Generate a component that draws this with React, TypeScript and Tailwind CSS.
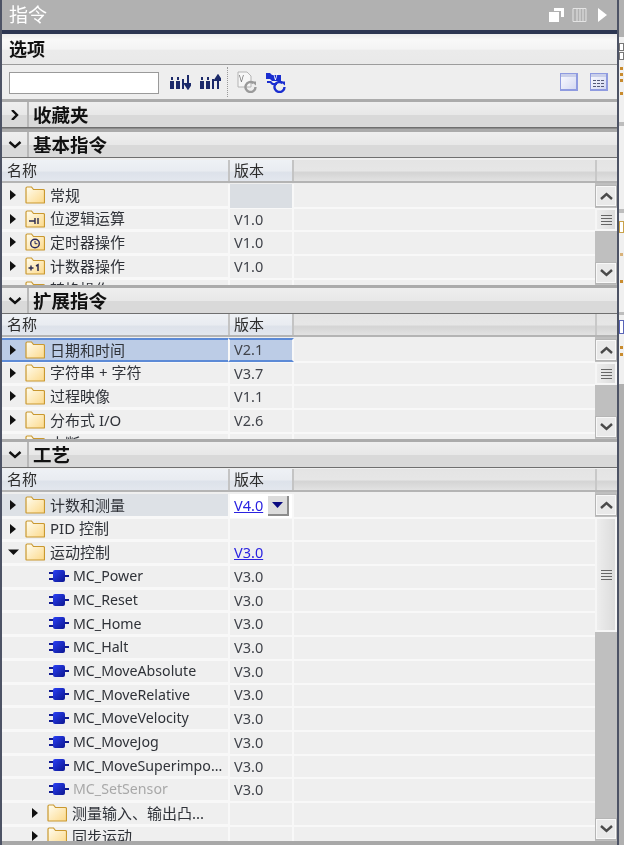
import type { ReactNode } from "react";

type Row = {
  name: string;
  version?: string;
  icon?: "folder" | "logic" | "timer" | "counter" | "block";
  depth?: number;
  arrow?: "right" | "down" | "none";
  link?: boolean;
  selected?: boolean;
  hover?: boolean;
  dim?: boolean;
  blank?: boolean;
};

const basicRows: Row[] = [
  { name: "常规", blank: true },
  { name: "位逻辑运算", version: "V1.0", icon: "logic" },
  { name: "定时器操作", version: "V1.0", icon: "timer" },
  { name: "计数器操作", version: "V1.0", icon: "counter" },
  { name: "转换操作" },
];

const extendedRows: Row[] = [
  { name: "日期和时间", version: "V2.1", selected: true },
  { name: "字符串 + 字符", version: "V3.7" },
  { name: "过程映像", version: "V1.1" },
  { name: "分布式 I/O", version: "V2.6" },
  { name: "中断" },
];

const blocks = [
  "MC_Power",
  "MC_Reset",
  "MC_Home",
  "MC_Halt",
  "MC_MoveAbsolute",
  "MC_MoveRelative",
  "MC_MoveVelocity",
  "MC_MoveJog",
  "MC_MoveSuperimpo...",
];

const techRows: Row[] = [
  { name: "计数和测量", hover: true },
  { name: "PID 控制" },
  { name: "运动控制", version: "V3.0", link: true, arrow: "down" },
  ...blocks.map((name): Row => ({ name, version: "V3.0", icon: "block", arrow: "none", depth: 1 })),
  { name: "MC_SetSensor", version: "V3.0", icon: "block", arrow: "none", depth: 1, dim: true },
  { name: "测量输入、输出凸...", depth: 1 },
  { name: "同步运动", depth: 1 },
];

const Folder = ({ children }: { children?: ReactNode }) => (
  <svg width="20" height="18" viewBox="0 0 20 18" className="shrink-0">
    <defs>
      <linearGradient id="folderFill" x1="0" y1="0" x2="1" y2="1">
        <stop offset="0" stopColor="#fffdf0" />
        <stop offset="1" stopColor="#fcd98a" />
      </linearGradient>
    </defs>
    <path
      d="M1 16.5V2.2C1 1.5 1.5 1 2.2 1h4.3l2 2.5h9.8c.7 0 1.2.5 1.2 1.2v11.8c0 .3-.2.5-.5.5H1.5c-.3 0-.5-.2-.5-.5z"
      fill="url(#folderFill)"
      stroke="#c9982f"
      strokeWidth="1.2"
    />
    {children}
  </svg>
);

const RowIcon = ({ icon }: { icon?: Row["icon"] }) => {
  if (icon === "block") {
    return (
      <svg width="20" height="14" viewBox="0 0 20 14" className="shrink-0">
        <defs>
          <linearGradient id="blockFill" x1="0" y1="0" x2="1" y2="1">
            <stop offset="0" stopColor="#2a40f5" />
            <stop offset="1" stopColor="#0c1690" />
          </linearGradient>
        </defs>
        <path d="M0 4h5M0 10h5M15 7h5" stroke="#101a90" strokeWidth="2" />
        <rect x="4" y="1" width="12" height="12" rx="2" fill="url(#blockFill)" />
      </svg>
    );
  }
  if (icon === "logic") {
    return (
      <Folder>
        <path d="M4 11h6M10 8v6M13 8v6" stroke="#2a2a50" strokeWidth="1.4" fill="none" />
      </Folder>
    );
  }
  if (icon === "timer") {
    return (
      <Folder>
        <circle cx="10" cy="10.5" r="4.3" fill="none" stroke="#2a2a60" strokeWidth="1.4" />
        <path d="M10 8v2.7h2.4" stroke="#2a2a60" strokeWidth="1" fill="none" />
      </Folder>
    );
  }
  if (icon === "counter") {
    return (
      <Folder>
        <path d="M3.5 11h5M6 8.5v5" stroke="#2a2a50" strokeWidth="1.4" />
        <path d="M11 9l2-1.2V14" stroke="#2a2a50" strokeWidth="1.5" fill="none" />
      </Folder>
    );
  }
  return <Folder />;
};

const Expander = ({ arrow = "right" }: { arrow?: Row["arrow"] }) => {
  if (arrow === "none") return <span className="w-[12px] shrink-0" />;
  return (
    <svg width="12" height="12" viewBox="0 0 12 12" className="shrink-0">
      {arrow === "right" ? <path d="M2 1l6 5-6 5z" fill="#111" /> : <path d="M0 3.5h11l-5.5 5.5z" fill="#111" />}
    </svg>
  );
};

const ScrollButton = ({ up }: { up?: boolean }) => (
  <div className="h-[22px] shrink-0 flex items-center justify-center bg-[#e9e9e9] border-2 border-[#f8f8f8] outline outline-[#b5b5b5] -outline-offset-1">
    <svg width="13" height="8" viewBox="0 0 13 8">
      <path d={up ? "M1 7l5.5-5L12 7" : "M1 1l5.5 5L12 1"} fill="none" stroke="#4a4a4a" strokeWidth="2.4" />
    </svg>
  </div>
);

const Scrollbar = ({ thumb }: { thumb: number }) => (
  <div className="w-[22px] shrink-0 h-full flex flex-col bg-[#bfbfbf] pt-[2px] pb-[1px]">
    <ScrollButton up />
    <div
      className="mt-[1px] shrink-0 flex items-center justify-center border-2 border-[#f6f6f6] bg-[linear-gradient(90deg,#ededed,#dcdcdc)]"
      style={{ height: thumb }}
    >
      <div className="w-[11px] flex flex-col gap-[2px]">
        <div className="h-px bg-[#666]" />
        <div className="h-px bg-[#666]" />
        <div className="h-px bg-[#666]" />
        <div className="h-px bg-[#666]" />
      </div>
    </div>
    <div className="flex-1" />
    <ScrollButton />
  </div>
);

const TableRow = ({ row }: { row: Row }) => {
  const depth = row.depth ?? 0;
  const isBlock = row.icon === "block";
  const band = row.selected
    ? "bg-[#bccce6] border-y-2 border-y-[#5c8ad6]"
    : "border-b-2 border-b-[#f8f8f8]";
  return (
    <div className="h-[23.7px] shrink-0 flex items-center border-b-2 border-b-[#f8f8f8]">
      <div className={`w-[226px] h-[23.7px] shrink-0 flex items-center ${band} ${row.hover ? "bg-[#dde1e6]" : ""}`}>
        <div className="flex items-center" style={{ paddingLeft: isBlock ? 22 : 6 + depth * 22 }}>
          <Expander arrow={row.arrow} />
          <span className={isBlock ? "ml-[13px]" : "ml-[5px]"}>
            <RowIcon icon={row.icon} />
          </span>
          <span
            className={`whitespace-nowrap ${isBlock ? "ml-[4px] text-[14.2px]" : "ml-[5px] text-[15px]"} ${row.dim ? "text-[#a8a8a8]" : "text-[#2f3238]"}`}
          >
            {row.name}
          </span>
        </div>
      </div>
      <div
        className={`w-[66px] h-[23.7px] shrink-0 flex items-center border-x-2 border-x-[#f8f8f8] ${row.selected ? band : ""} ${row.selected ? "border-x-[#bccce6]" : ""} ${row.blank ? "bg-[#dadee3]" : ""}`}
      >
        {row.hover ? (
          <div className="h-full w-full flex items-center bg-white pl-[4px]">
            <span className="text-[#2a22e0] underline">V4.0</span>
            <div className="ml-[5px] w-[21px] h-[20px] flex items-center justify-center bg-[#dcdcdc] border-r-2 border-b-2 border-[#8c8c8c]">
              <svg width="11" height="6" viewBox="0 0 11 6">
                <path d="M0 0h11L5.5 6z" fill="#0a0a80" />
              </svg>
            </div>
          </div>
        ) : (
          <span className={`pl-[4px] ${row.link ? "text-[#2a22e0] underline" : "text-[#40434a]"}`}>
            {row.version}
          </span>
        )}
      </div>
    </div>
  );
};

const TableHead = ({ gap }: { gap: number }) => (
  <div
    className="h-[23px] shrink-0 flex text-[15px] text-[#2c2c2c] bg-[linear-gradient(#e4e4e4_0%,#e6e6e6_50%,#d4d4d4_60%,#e2e2e2_100%)] border-b-2 border-b-[#b4b4b4]"
    style={{ marginTop: gap }}
  >
    <div className="w-[226px] pl-[5px] flex items-center bg-[linear-gradient(#eef1f5_0%,#e9ecf1_50%,#dde2ea_60%,#e3e7ee_100%)]">
      名称
    </div>
    <div className="w-[66px] pl-[4px] flex items-center border-x-2 border-x-[#c4c4c4] bg-[linear-gradient(#eef1f5_0%,#e9ecf1_50%,#dde2ea_60%,#e3e7ee_100%)]">
      版本
    </div>
    <div className="flex-1" />
    <div className="w-[22px] border-l-2 border-l-[#c8c8c8]" />
  </div>
);

const Table = ({
  rows,
  height,
  thumb,
  gap,
  top,
}: {
  rows: Row[];
  height: number;
  thumb: number;
  gap: number;
  top: number;
}) => (
  <div className="flex flex-col shrink-0">
    <TableHead gap={gap} />
    <div className="flex overflow-hidden" style={{ height }}>
      <div className="flex-1 flex flex-col overflow-hidden" style={{ paddingTop: top }}>
        {rows.map((row) => (
          <TableRow key={row.name} row={row} />
        ))}
      </div>
      <Scrollbar thumb={thumb} />
    </div>
  </div>
);

const Section = ({ title, open = true }: { title: string; open?: boolean }) => (
  <div className="h-[29px] shrink-0 flex items-stretch border-t-[3px] border-t-[#ababab] border-b border-b-[#6f6f6f] bg-[linear-gradient(#eeeeee_0%,#e8e8e8_50%,#d9d9d9_52%,#d9d9d9_100%)]">
    <div className="w-[27px] flex items-center justify-center border-r-2 border-r-[#b8b8b8]">
      <svg width="14" height="10" viewBox="0 0 14 10">
        {open ? (
          <path d="M1.5 2l5.5 5 5.5-5" fill="none" stroke="#111" strokeWidth="2.4" />
        ) : (
          <path d="M4 0l5 5-5 5" fill="none" stroke="#111" strokeWidth="2.4" />
        )}
      </svg>
    </div>
    <span className="ml-[4px] mt-[2px] text-[18.5px] font-semibold text-[#111] leading-none self-center">{title}</span>
  </div>
);

const FindIcon = ({ up }: { up?: boolean }) => (
  <svg width="21" height="16" viewBox="0 0 21 16">
    <g fill="#1c2a6a">
      <rect x="0" y="7" width="4" height="8" />
      <rect x="6" y="7" width="4" height="8" />
      <rect x="1" y="3" width="2" height="3" />
      <rect x="7" y="3" width="2" height="3" />
      <path d="M12 5h2v10h-2z" />
    </g>
    {up ? (
      <path d="M18 15V3M15 6l3-4.5L21 6z" stroke="#1c2a6a" strokeWidth="2" fill="#1c2a6a" />
    ) : (
      <path d="M18 1v12M15 10l3 4.5 3-4.5z" stroke="#1c2a6a" strokeWidth="2" fill="#1c2a6a" />
    )}
  </svg>
);

const VersionIcon = ({ active }: { active?: boolean }) => {
  const main = active ? "#1a2ed0" : "#9a9a9a";
  return (
    <svg width="22" height="22" viewBox="0 0 22 22">
      {active ? (
        <path d="M1 2h4l2 2h9v6H7L5 8H1zM2 10h4l2 2h4v2H7l-2-2H2z" fill="#1a2ed0" />
      ) : (
        <path d="M2 1h9l4 4v11H2z" fill="#f6f6f6" stroke="#b4b4b4" />
      )}
      <text x={active ? 8 : 3} y={active ? 9 : 11} fontSize="8" fontFamily="Noto Sans" fill={active ? "#fff" : "#777"}>
        V
      </text>
      <path d="M19.5 16a5 5 0 1 1-2-4" fill="none" stroke={main} strokeWidth="2.4" />
      <path d="M15 10.5h5v4z" fill={main} />
    </svg>
  );
};

const ViewIcon = ({ grid }: { grid?: boolean }) => (
  <div className="w-[18px] h-[18px] border border-[#8f9be0] border-b-2 border-r-2 bg-[linear-gradient(135deg,#fbfbff,#d4d9f2)] flex flex-col">
    <div className="h-[3px] bg-[#c9cfea]" />
    {grid && (
      <div className="mt-[3px] mx-[2px] grid grid-cols-3 gap-x-px gap-y-[2px]">
        {Array.from({ length: 9 }, (_, i) => (
          <div key={i} className="h-px bg-[#555a78]" />
        ))}
      </div>
    )}
  </div>
);

export default function App() {
  return (
    <div
      className="w-[624px] h-[845px] flex overflow-hidden bg-[#efefef] text-[14.5px] blur-[0.35px]"
      style={{ fontFamily: '"Noto Sans", "Noto Sans CJK SC", sans-serif' }}
    >
      <div className="w-[619px] shrink-0 h-full flex flex-col border-l-2 border-l-[#4d5365] border-r-2 border-r-[#4d5365] overflow-hidden">
        {/* title bar */}
        <div className="h-[30px] shrink-0 flex items-center bg-[#b1b1b1] pl-[7px] pr-[10px]">
          <span className="text-[19px] text-white">指令</span>
          <div className="ml-auto flex items-center gap-[8px]">
            <svg width="15" height="14" viewBox="0 0 15 14">
              <path d="M5 0h10v9h-3V3H5z" fill="#fff" />
              <rect x="0" y="4" width="10" height="10" fill="#fff" />
            </svg>
            <svg width="15" height="14" viewBox="0 0 15 14">
              <path d="M1 .5h13v13H1zM5 .5v13M8 .5v13M11 .5v13" fill="none" stroke="#e4e4e4" />
            </svg>
            <svg width="9" height="14" viewBox="0 0 9 14" className="ml-[3px]">
              <path d="M0 0l9 7-9 7z" fill="#fff" />
            </svg>
          </div>
        </div>
        <div className="h-[4px] shrink-0 bg-[#2c3652]" />

        {/* options */}
        <div className="h-[31px] shrink-0 flex items-center pl-[7px] border-b border-b-[#9c9c9c] bg-[linear-gradient(#ececec_0%,#f8f8f8_20%,#f4f4f4_50%,#ebebeb_55%,#e9e9e9_100%)]">
          <span className="text-[18px] font-semibold text-[#111]">选项</span>
        </div>

        {/* toolbar */}
        <div className="h-[34px] shrink-0 flex items-center pl-[7px] pr-[9px] bg-[#eeeeee]">
          <div className="w-[150px] h-[22px] mt-[1px] bg-white border border-[#9a9a9a]" />
          <div className="ml-[11px]">
            <FindIcon />
          </div>
          <div className="ml-[9px]">
            <FindIcon up />
          </div>
          <div className="ml-[6px] h-[30px] border-l border-dotted border-l-[#9a9a9a]" />
          <div className="ml-[8px]">
            <VersionIcon />
          </div>
          <div className="ml-[7px]">
            <VersionIcon active />
          </div>
          <div className="ml-auto flex items-center gap-[12px]">
            <ViewIcon />
            <ViewIcon grid />
          </div>
        </div>

        <Section title="收藏夹" open={false} />
        <div className="h-[1px] shrink-0 bg-[#8c8c8c]" />
        <Section title="基本指令" />
        <Table rows={basicRows} height={102} thumb={23} gap={2} top={2} />
        <Section title="扩展指令" />
        <Table rows={extendedRows} height={102} thumb={23} gap={0} top={2} />
        <Section title="工艺" />
        <Table rows={techRows} height={349} thumb={115} gap={1} top={3} />
        <div className="flex-1 bg-[#a8a8a8]" />
      </div>

      {/* neighbouring pane */}
      <div className="flex-1 flex flex-col bg-[#f0f0f0]">
        <div className="h-[37px] shrink-0 bg-[#b1b1b1]" />
        <div className="mt-[6px] w-[5px] h-[8px] border border-[#777] bg-white" />
        <div className="w-[5px] h-[8px] mt-[1px] border border-[#777] bg-white" />
        <div className="mt-[7px] ml-[1px] w-[3px] h-[3px] bg-[#c88b2e]" />
        <div className="mt-[3px] ml-[1px] w-[3px] h-[3px] bg-[#c88b2e]" />
        <div className="mt-[3px] ml-[1px] w-[3px] h-[3px] bg-[#c88b2e]" />
        <div className="mt-[10px] ml-[1px] w-[3px] h-[3px] bg-[#c88b2e]" />
        <div className="mt-[27px] h-[4px] shrink-0 bg-[#bdbdbd]" />
        <div className="mt-[83px] h-[4px] shrink-0 bg-[#bdbdbd]" />
        <div className="mt-[8px] w-[5px] h-[12px] border border-[#c9a24a] bg-white" />
        <div className="mt-[20px] ml-[1px] w-[3px] h-[3px] bg-[#d8b27a]" />
        <div className="mt-[24px] ml-[1px] w-[3px] h-[3px] bg-[#c88b2e]" />
        <div className="mt-[29px] h-[3px] shrink-0 bg-[#bdbdbd]" />
        <div className="mt-[5px] w-[5px] h-[14px] border border-[#5a65b8] bg-white" />
        <div className="mt-[12px] ml-[1px] w-[3px] h-[3px] bg-[#c88b2e]" />
        <div className="mt-[4px] ml-[1px] w-[3px] h-[3px] bg-[#c88b2e]" />
        <div className="flex-1 bg-[#b0b0b0] mt-[28px]" />
      </div>
    </div>
  );
}
